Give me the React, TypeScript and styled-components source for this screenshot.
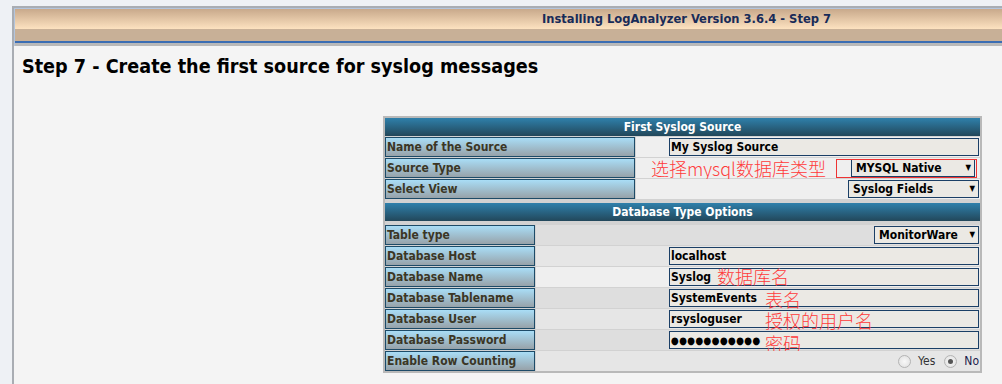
import React from "react";
import styled, { createGlobalStyle } from "styled-components";

const GlobalStyle = createGlobalStyle`
  html, body {
    margin: 0;
    padding: 0;
  }
  body {
    background: #eef1f5;
    font-family: "DejaVu Sans Condensed", "DejaVu Sans", Tahoma, sans-serif;
    height: 384px;
    overflow: hidden;
  }
`;

type Shade = "light" | "mid" | "dark";

const shades: Record<Shade, string> = {
  light: "#efefef",
  mid: "#e6e6e6",
  dark: "#dedede",
};

const Frame = styled.div`
  margin: 6px 0 0 12px;
  border-top: 2px solid #a9adb3;
  border-left: 2px solid #a9adb3;
  height: 376px;
  background: #f4f4f4;
  display: flex;
  flex-direction: column;
`;

const Header = styled.header`
  border-top: 1px solid #b3c5dd;
  border-left: 1px solid #b3c5dd;
  background: #c8b097;
`;

const TitleBar = styled.div`
  height: 20px;
  line-height: 20px;
  padding-left: 356px;
  text-align: center;
  background: linear-gradient(#c8a98b, #fde2c0);
  color: #182b58;
  font-weight: bold;
  font-size: 12.8px;
`;

const TanBand = styled.div`
  height: 12px;
`;

const BlueRule = styled.div`
  height: 2px;
  background: #3b6db3;
`;

const GreyRule = styled.div`
  height: 3px;
  background: #b9b9b9;
`;

const Content = styled.main`
  display: flex;
  flex-direction: column;
`;

const Heading = styled.h1`
  margin: 8px 0 0 8px;
  font-size: 19.6px;
  line-height: 26px;
  font-weight: bold;
  color: #000;
`;

const SourceTable = styled.div`
  margin: 36px 0 0 369px;
  width: 595px;
  border: 2px solid #b9b9b9;
  background: #d2d2d2;
  display: flex;
  flex-direction: column;
  gap: 4px;
`;

const Section = styled.div<{ $labelWidth: number }>`
  display: grid;
  grid-template-columns: ${(p) => p.$labelWidth}px 1fr;
  column-gap: 1px;
  row-gap: 1px;
`;

const SectionTitle = styled.div<{ $after: number }>`
  grid-column: 1 / -1;
  height: 18px;
  line-height: 18px;
  margin-bottom: ${(p) => p.$after}px;
  background: linear-gradient(#2f80ab, #22475a);
  color: #fff;
  font-weight: bold;
  font-size: 12px;
  text-align: center;
`;

const Label = styled.div`
  box-sizing: border-box;
  height: 20px;
  line-height: 18px;
  border: 1px solid #1d4b68;
  background: linear-gradient(#a9ddf6, #97a2a9);
  color: #3b3625;
  font-weight: bold;
  font-size: 12px;
  padding-left: 1px;
`;

const Value = styled.div<{ $shade: Shade; $pad?: number }>`
  position: relative;
  height: 20px;
  display: flex;
  justify-content: flex-end;
  align-items: center;
  gap: 8px;
  padding-right: ${(p) => p.$pad ?? 1}px;
  background: ${(p) => shades[p.$shade]};
`;

const TextInput = styled.div`
  box-sizing: border-box;
  width: 310px;
  height: 18px;
  line-height: 16px;
  border: 1px solid #1b3f66;
  background: #ebe9e4;
  padding-left: 1px;
  font-weight: bold;
  font-size: 12px;
  color: #000;
  white-space: nowrap;
`;

const Dots = styled.span`
  font-size: 10px;
  letter-spacing: 0.3px;
`;

const SelectBox = styled.div<{ $width: number }>`
  box-sizing: border-box;
  width: ${(p) => p.$width}px;
  height: 18px;
  line-height: 16px;
  border: 1px solid #1b3f66;
  background: #ebe9e4;
  padding: 0 3px 0 4px;
  display: flex;
  justify-content: space-between;
  font-weight: bold;
  font-size: 12px;
  color: #000;
`;

const Arrow = styled.span`
  font-size: 8px;
  line-height: 16px;
`;

const Note = styled.span<{ $left: number; $top?: number }>`
  position: absolute;
  left: ${(p) => p.$left}px;
  top: ${(p) => p.$top ?? 0}px;
  font-family: "Noto Sans CJK SC", "DejaVu Sans", sans-serif;
  font-weight: 300;
  font-size: 18px;
  line-height: 17px;
  color: #ff3b3b;
  white-space: nowrap;
`;

const RedBox = styled.div`
  position: absolute;
  left: 200px;
  top: 1px;
  width: 141px;
  height: 19px;
  box-sizing: border-box;
  border: 1px solid #ee3333;
`;

const RadioGroup = styled.div`
  display: flex;
  align-items: center;
  gap: 9px;
  font-size: 12px;
`;

const RadioItem = styled.label<{ $color: string }>`
  display: flex;
  align-items: center;
  gap: 7px;
  color: ${(p) => p.$color};
`;

const RadioDot = styled.span<{ $checked?: boolean }>`
  box-sizing: border-box;
  width: 13px;
  height: 13px;
  border-radius: 50%;
  border: 1px solid #b4b4b4;
  background: radial-gradient(circle, #f8f8f8, #dedede);
  display: flex;
  align-items: center;
  justify-content: center;
  &::after {
    content: "";
    width: 5px;
    height: 5px;
    border-radius: 50%;
    background: ${(p) => (p.$checked ? "#555" : "transparent")};
  }
`;

export default function App() {
  return (
    <>
      <GlobalStyle />
      <Frame>
        <Header>
          <TitleBar>Installing LogAnalyzer Version 3.6.4 - Step 7</TitleBar>
          <TanBand />
          <BlueRule />
          <GreyRule />
        </Header>
        <Content>
          <Heading>Step 7 - Create the first source for syslog messages</Heading>
          <SourceTable>
            <Section $labelWidth={250}>
              <SectionTitle $after={0}>First Syslog Source</SectionTitle>
              <Label>Name of the Source</Label>
              <Value $shade="light">
                <TextInput>My Syslog Source</TextInput>
              </Value>
              <Label>Source Type</Label>
              <Value $shade="light" $pad={5}>
                <Note $left={15} $top={2}>选择mysql数据库类型</Note>
                <SelectBox $width={124}>
                  MYSQL Native <Arrow>▼</Arrow>
                </SelectBox>
                <RedBox />
              </Value>
              <Label>Select View</Label>
              <Value $shade="light">
                <SelectBox $width={131}>
                  Syslog Fields <Arrow>▼</Arrow>
                </SelectBox>
              </Value>
            </Section>
            <Section $labelWidth={150}>
              <SectionTitle $after={3}>Database Type Options</SectionTitle>
              <Label>Table type</Label>
              <Value $shade="dark">
                <SelectBox $width={105}>
                  MonitorWare <Arrow>▼</Arrow>
                </SelectBox>
              </Value>
              <Label>Database Host</Label>
              <Value $shade="mid">
                <TextInput>localhost</TextInput>
              </Value>
              <Label>Database Name</Label>
              <Value $shade="light">
                <TextInput>Syslog</TextInput>
                <Note $left={181} $top={1}>数据库名</Note>
              </Value>
              <Label>Database Tablename</Label>
              <Value $shade="dark">
                <TextInput>SystemEvents</TextInput>
                <Note $left={229} $top={3}>表名</Note>
              </Value>
              <Label>Database User</Label>
              <Value $shade="mid">
                <TextInput>rsysloguser</TextInput>
                <Note $left={229} $top={3}>授权的用户名</Note>
              </Value>
              <Label>Database Password</Label>
              <Value $shade="dark">
                <TextInput>
                  <Dots>●●●●●●●●●●●</Dots>
                </TextInput>
                <Note $left={229} $top={5}>密码</Note>
              </Value>
              <Label>Enable Row Counting</Label>
              <Value $shade="mid">
                <RadioGroup>
                  <RadioItem $color="#333">
                    <RadioDot /> Yes
                  </RadioItem>
                  <RadioItem $color="#1c1c4c">
                    <RadioDot $checked /> No
                  </RadioItem>
                </RadioGroup>
              </Value>
            </Section>
          </SourceTable>
        </Content>
      </Frame>
    </>
  );
}
